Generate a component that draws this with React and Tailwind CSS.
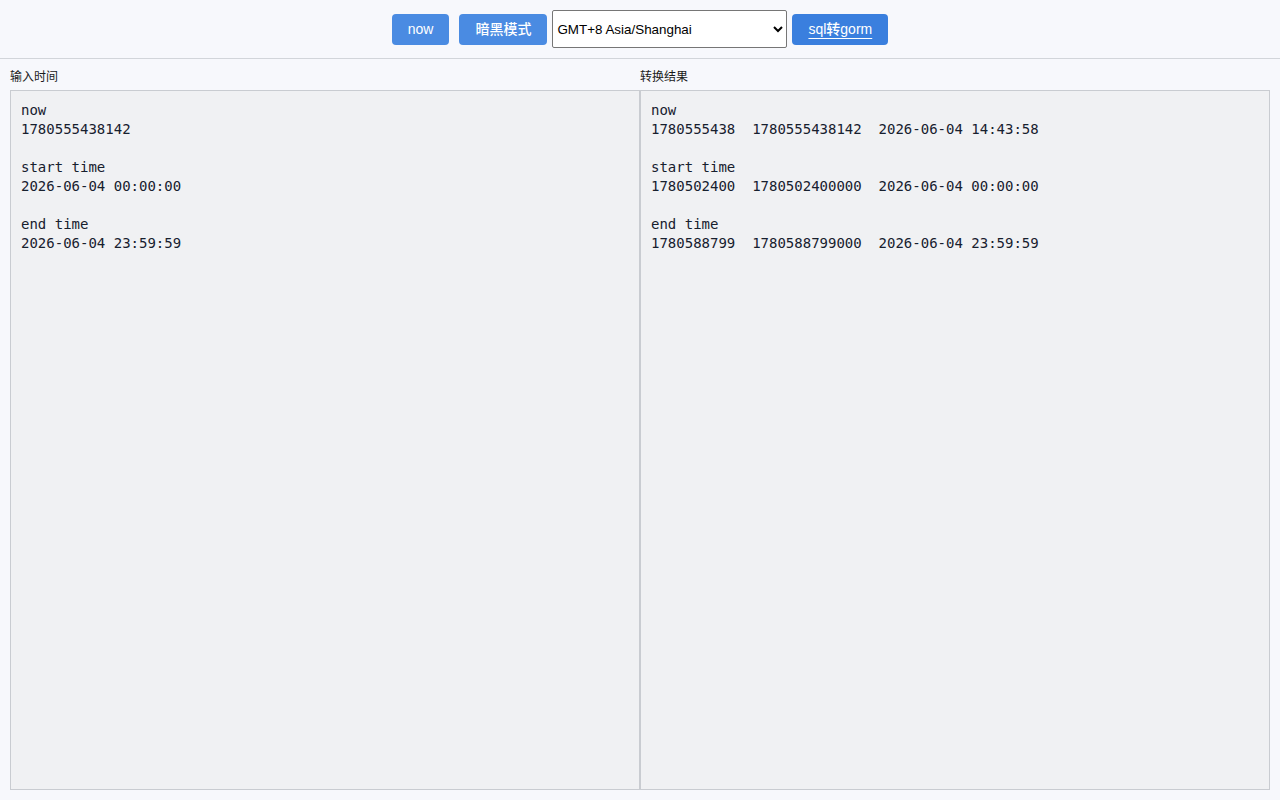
import React, { useState } from "react";

const inputText = `now
1780555438142

start time
2026-06-04 00:00:00

end time
2026-06-04 23:59:59`;

const outputText = `now
1780555438  1780555438142  2026-06-04 14:43:58

start time
1780502400  1780502400000  2026-06-04 00:00:00

end time
1780588799  1780588799000  2026-06-04 23:59:59`;

const sans = "font-['Helvetica','Liberation_Sans','Noto_Sans_CJK_SC',sans-serif]";
const mono = "font-['DejaVu_Sans_Mono','Noto_Sans_CJK_SC',monospace]";

export default function App() {
  const [input, setInput] = useState(inputText);
  const [tz, setTz] = useState("Asia/Shanghai");

  return (
    <div className={`min-h-screen bg-[#f7f8fc] ${sans}`}>
      {/* toolbar */}
      <div className="h-[59px] flex items-center justify-center border-b border-[#d2d5da]">
        <button className="h-[31px] px-[16px] mr-[10px] rounded-[4px] bg-[#4a8be2] text-white text-[14px] font-medium">
          now
        </button>
        <button className="h-[31px] px-[16px] rounded-[4px] bg-[#4a8be2] text-white text-[14px] font-medium">
          暗黑模式
        </button>
        <select
          value={tz}
          onChange={(e) => setTz(e.target.value)}
          className="ml-[5px] h-[38px] w-[235px] px-0 border border-[#767676] rounded-[2px] bg-white text-[13.4px] text-black"
        >
          <option value="Asia/Shanghai">GMT+8 Asia/Shanghai</option>
          <option value="UTC">GMT+0 UTC</option>
        </select>
        <button className="ml-[5px] h-[31px] px-[16px] rounded-[4px] bg-[#3a7fde] text-white text-[14px] font-medium">
          <span className="underline underline-offset-[4px]">sql转gorm</span>
        </button>
      </div>

      {/* panels */}
      <div className="flex px-[10px] pt-[11px] pb-[10px]">
        <div className="flex-1 flex flex-col">
          <label className="text-[12px] leading-[14px] text-[#1a1a1a] mb-[6px]">输入时间</label>
          <textarea
            value={input}
            onChange={(e) => setInput(e.target.value)}
            className={`h-[700px] resize-none border border-[#c9ccd1] bg-[#f0f1f3] px-[10px] py-[10px] text-[14px] leading-[19px] text-[#17202e] outline-none ${mono}`}
          />
        </div>
        <div className="flex-1 flex flex-col">
          <label className="text-[12px] leading-[14px] text-[#1a1a1a] mb-[6px]">转换结果</label>
          <textarea
            readOnly
            value={outputText}
            className={`h-[700px] resize-none border border-[#c9ccd1] bg-[#f0f1f3] px-[10px] py-[10px] text-[14px] leading-[19px] text-[#17202e] outline-none ${mono}`}
          />
        </div>
      </div>
    </div>
  );
}
